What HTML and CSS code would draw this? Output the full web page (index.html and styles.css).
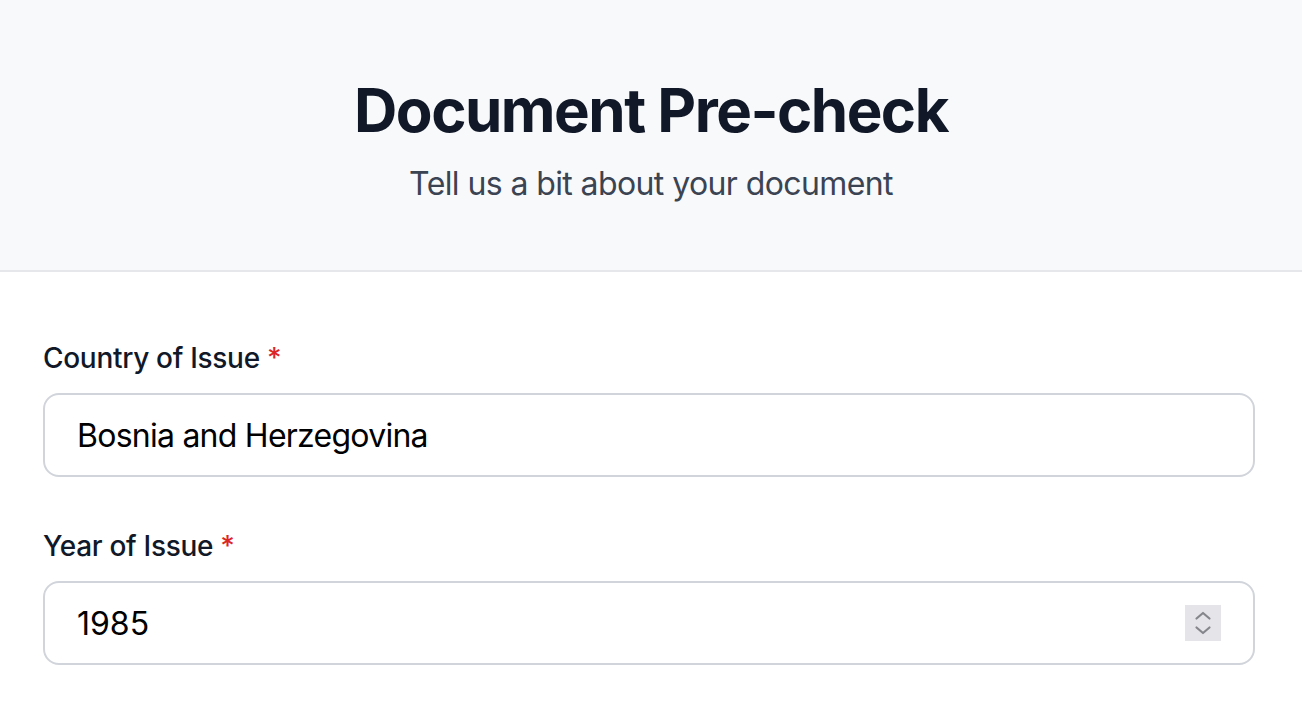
FILE: index.html
```html
<!DOCTYPE html>
<html lang="en">
<head>
    <meta charset="UTF-8">
    <meta name="viewport" content="width=device-width, initial-scale=1.0">
    <title>Document Pre-check</title>
    <link rel="stylesheet" href="styles.css">
</head>
<body>

    <!-- Header -->
    <header class="header">
        <h1 class="title">Document Pre-check</h1>
        <p class="subtitle">Tell us a bit about your document</p>
    </header>

    <!-- Form -->
    <main class="form">
        <div class="field">
            <label for="country" class="label">Country of Issue <span class="required">*</span></label>
            <div class="input-box">
                <input type="text" id="country" class="input" value="Bosnia and Herzegovina">
            </div>
        </div>

        <div class="field">
            <label for="year" class="label">Year of Issue <span class="required">*</span></label>
            <div class="input-box">
                <input type="number" id="year" class="input" value="1985">
                <span class="spinner">
                    <svg width="36" height="36" viewBox="0 0 36 36" fill="none" stroke="#85858c" stroke-width="2.2" stroke-linecap="round" stroke-linejoin="round">
                        <path d="M11.5 13.5 L18 8 L24.5 13.5"/>
                        <path d="M11.5 22.5 L18 28 L24.5 22.5"/>
                    </svg>
                </span>
            </div>
        </div>
    </main>

</body>
</html>
```

FILE: styles.css
```css
body {
    font-family: Inter, "Noto Sans", sans-serif;
    background-color: #ffffff;
    margin: 0;
    color: #111827;
}
.header {
    background-color: #f8f9fa;
    border-bottom: 2px solid #e5e7eb;
    padding: 74px 0 62px;
    text-align: center;
}
.title {
    margin: 0;
    font-size: 60px;
    line-height: 72px;
    font-weight: 700;
    color: #111827;
    letter-spacing: -1.5px;
}
.subtitle {
    margin: 14px 0 0;
    font-size: 32px;
    line-height: 48px;
    color: #3b4453;
    letter-spacing: -0.6px;
}
.form {
    padding: 66px 47px 0 43px;
}
.field {
    margin-bottom: 49px;
}
.label {
    display: block;
    font-size: 28px;
    line-height: 40px;
    font-weight: 500;
    color: #111827;
    margin-bottom: 15px;
    letter-spacing: -0.3px;
}
.required {
    color: #dc2626;
}
.input-box {
    display: flex;
    align-items: center;
    border: 2px solid #d1d5db;
    border-radius: 16px;
    padding: 0 32px;
    height: 80px;
    background-color: #ffffff;
}
.input {
    flex: 1;
    border: none;
    outline: none;
    padding: 2px 0 0;
    font-family: Inter, "Noto Sans", sans-serif;
    font-size: 32px;
    line-height: 48px;
    color: #000000;
    background: transparent;
    min-width: 0;
    letter-spacing: -0.75px;
}
.input[type="number"] {
    -moz-appearance: textfield;
    letter-spacing: 0;
}
.input::-webkit-inner-spin-button,
.input::-webkit-outer-spin-button {
    -webkit-appearance: none;
    margin: 0;
}
.spinner {
    display: flex;
    width: 36px;
    height: 36px;
    background-color: #e4e4e9;
}
```
